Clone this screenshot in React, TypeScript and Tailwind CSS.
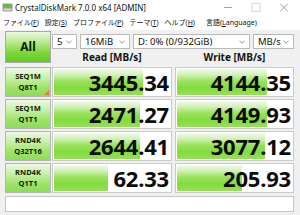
import React from 'react';

interface RowData {
  top: string;
  bottom: string;
  read: string;
  write: string;
  readBar: number;
  writeBar: number;
  marked?: boolean;
}

const rows: RowData[] = [
  { top: 'SEQ1M', bottom: 'Q8T1', read: '3445.34', write: '4144.35', readBar: 89, writeBar: 90, marked: true },
  { top: 'SEQ1M', bottom: 'Q1T1', read: '2471.27', write: '4149.93', readBar: 86, writeBar: 90 },
  { top: 'RND4K', bottom: 'Q32T16', read: '2644.41', write: '3077.12', readBar: 86, writeBar: 88 },
  { top: 'RND4K', bottom: 'Q1T1', read: '62.33', write: '205.93', readBar: 54, writeBar: 65 },
];

const menus = [
  { label: 'ファイル', key: 'F' },
  { label: '設定', key: 'S' },
  { label: 'プロファイル', key: 'P' },
  { label: 'テーマ', key: 'T' },
  { label: 'ヘルプ', key: 'H' },
];

const Chevron = () => (
  <svg width="6" height="4" viewBox="0 0 6 4" className="shrink-0">
    <polyline points="0.5,0.8 3,3.2 5.5,0.8" fill="none" stroke="#7a7a7a" strokeWidth="0.8" />
  </svg>
);

const Combo: React.FC<{ text: string; className: string }> = ({ text, className }) => (
  <div className={`h-[15px] bg-white border border-[#b9b9b9] flex items-center justify-between pl-[4px] pr-[4px] text-[9.5px] text-[#111] leading-none ${className}`}>
    <span>{text}</span>
    <Chevron />
  </div>
);

const Meter: React.FC<{ value: string; bar: number; className: string }> = ({ value, bar, className }) => (
  <div className={`relative h-full bg-white border border-[#cacaca] flex items-center justify-end pr-[2px] ${className}`}>
    <div
      className="absolute left-[1px] top-[1px] bottom-[1px] bg-[linear-gradient(180deg,#f3faee_0%,#d2f1b8_22%,#98e25a_48%,#84db40_72%,#93e153_100%)]"
      style={{ width: bar }}
    />
    <span className="relative text-[22px] font-bold text-[#0c0c0c] leading-none tracking-[-0.2px]">{value}</span>
  </div>
);

export default function App() {
  return (
    <div className="w-[300px] h-[215px] bg-[#f0f0f0] overflow-hidden font-['Noto_Sans','Noto_Sans_CJK_JP',sans-serif] text-black">
      {/* title bar */}
      <div className="h-[15px] bg-white flex items-center">
        <svg width="11" height="9" viewBox="0 0 11 9" className="ml-[2px]">
          <rect x="0.5" y="0.5" width="10" height="8" rx="1" fill="#9a9a9a" />
          <rect x="1.5" y="1.5" width="8" height="3" fill="#5fbf3a" />
          <rect x="1.5" y="5.5" width="8" height="2" fill="#d8d8d8" />
        </svg>
        <span className="ml-[2px] text-[8px] leading-none text-[#111]">CrystalDiskMark 7.0.0 x64 [ADMIN]</span>
        <div className="ml-auto flex items-center">
          <svg width="28" height="15" viewBox="0 0 28 15">
            <line x1="10" y1="7.5" x2="18" y2="7.5" stroke="#8c8c8c" strokeWidth="0.8" />
          </svg>
          <svg width="28" height="15" viewBox="0 0 28 15">
            <rect x="10" y="3.5" width="8" height="8" fill="none" stroke="#cfcfcf" strokeWidth="0.8" />
          </svg>
          <svg width="28" height="15" viewBox="0 0 28 15" className="mr-[2px]">
            <line x1="10" y1="3.5" x2="18" y2="11.5" stroke="#8c8c8c" strokeWidth="0.8" />
            <line x1="18" y1="3.5" x2="10" y2="11.5" stroke="#8c8c8c" strokeWidth="0.8" />
          </svg>
        </div>
      </div>

      {/* menu bar */}
      <div className="h-[15px] bg-white flex items-center pl-[3px] gap-[6px] text-[7px] leading-none text-[#111]">
        {menus.map((m) => (
          <span key={m.key}>
            {m.label}(<span className="underline">{m.key}</span>)
          </span>
        ))}
        <span className="ml-[5px]">言語(<span className="underline">L</span>anguage)</span>
      </div>

      {/* content */}
      <div className="px-[5px] pt-[1px]">
        <div className="flex">
          <button className="w-[46px] h-[32px] border border-[#a9a9a9] bg-[linear-gradient(180deg,#eaf8de_0%,#b6ea8c_35%,#7cd53a_70%,#66c924_100%)] text-[12px] font-bold text-[#0e1a05] leading-none">
            All
          </button>
          <div className="ml-[1px] flex-1 flex flex-col">
            <div className="flex gap-[3px] mt-[3px]">
              <Combo text="5" className="w-[25px]" />
              <Combo text="16MiB" className="w-[50px]" />
              <Combo text="D: 0% (0/932GiB)" className="w-[117px]" />
              <Combo text="MB/s" className="w-[41px]" />
            </div>
            <div className="flex h-[16px] items-center text-[10px] font-bold leading-none text-[#111]">
              <div className="w-[120px] text-center">Read [MB/s]</div>
              <div className="ml-[3px] w-[119px] text-center">Write [MB/s]</div>
            </div>
          </div>
        </div>

        <div className="mt-[2px] flex flex-col gap-[2px]">
          {rows.map((r, i) => (
            <div key={i} className="flex h-[30px]">
              <div className="relative w-[46px] h-full border border-[#b4b4b4] bg-[linear-gradient(180deg,#eef9e5_0%,#c9f0a9_35%,#9de36a_70%,#8edd52_100%)] flex flex-col items-center justify-center gap-[4px] text-[7.5px] font-bold leading-none text-[#132205]">
                <span>{r.top}</span>
                <span>{r.bottom}</span>
                {r.marked && (
                  <svg width="5" height="5" viewBox="0 0 5 5" className="absolute right-[1px] bottom-[1px]">
                    <polygon points="5,0 5,5 0,5" fill="#ea7d24" />
                  </svg>
                )}
              </div>
              <Meter value={r.read} bar={r.readBar} className="ml-[1px] w-[120px]" />
              <Meter value={r.write} bar={r.writeBar} className="ml-[3px] w-[119px]" />
            </div>
          ))}
        </div>

        <div className="mt-[3px] h-[16px] w-[289px] bg-white border border-[#c6c6c6]" />
      </div>
    </div>
  );
}
